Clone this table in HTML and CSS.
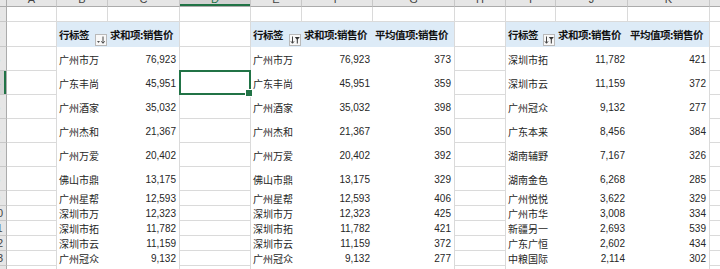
FILE: index.html
```html
<!DOCTYPE html>
<html lang="zh-CN">
<head>
<meta charset="utf-8">
<title>数据透视表</title>
<link rel="stylesheet" href="styles.css">
</head>
<body>
<div class="sheet">
  <div class="corner"></div>
  <div class="ch"><span>A</span></div>
  <div class="ch"><span>B</span></div>
  <div class="ch"><span>C</span></div>
  <div class="ch sel"><span>D</span></div>
  <div class="ch"><span>E</span></div>
  <div class="ch"><span>F</span></div>
  <div class="ch"><span>G</span></div>
  <div class="ch"><span>H</span></div>
  <div class="ch"><span>I</span></div>
  <div class="ch"><span>J</span></div>
  <div class="ch"><span>K</span></div>
  <div class="ch"><span>L</span></div>

  <div class="rh"><span>1</span></div>
  <div class="c"></div><div class="c"></div><div class="c"></div><div class="c"></div>
  <div class="c"></div><div class="c"></div><div class="c"></div><div class="c"></div>
  <div class="c"></div><div class="c"></div><div class="c"></div><div class="c"></div>

  <div class="rh"><span>2</span></div>
  <div class="c"></div>
  <div class="pivot pv1">
    <div class="hd lbl"><span>行标签</span>
      <span class="fbtn"><svg viewBox="0 0 10 10" width="10" height="10"><path d="M1 6h3l-1.5 2z" fill="#555"/><path d="M7 1.5v6.5M5.3 6.3L7 8.3 8.7 6.3" stroke="#444" stroke-width="1" fill="none"/></svg></span>
    </div>
    <div class="hd">求和项:销售价</div>
    <div class="t">广州市万</div><div class="n">76,923</div>
    <div class="t">广东丰尚</div><div class="n">45,951</div>
    <div class="t">广州酒家</div><div class="n">35,032</div>
    <div class="t">广州杰和</div><div class="n">21,367</div>
    <div class="t">广州万爱</div><div class="n">20,402</div>
    <div class="t">佛山市鼎</div><div class="n">13,175</div>
    <div class="t">广州星帮</div><div class="n">12,593</div>
    <div class="t">深圳市万</div><div class="n">12,323</div>
    <div class="t">深圳市拓</div><div class="n">11,782</div>
    <div class="t">深圳市云</div><div class="n">11,159</div>
    <div class="t">广州冠众</div><div class="n">9,132</div>
  </div>
  <div class="c"></div>
  <div class="pivot pv2">
    <div class="hd lbl"><span>行标签</span>
      <span class="fbtn"><svg viewBox="0 0 10 10" width="10" height="10"><path d="M2.5 1.5v6.5M0.9 6.3L2.5 8.3 4.1 6.3" stroke="#444" stroke-width="1" fill="none"/><path d="M4.8 2h5l-2 2.6V8.5h-1V4.6z" fill="#333"/></svg></span>
    </div>
    <div class="hd">求和项:销售价</div>
    <div class="hd">平均值项:销售价</div>
    <div class="t">广州市万</div><div class="n">76,923</div><div class="n">373</div>
    <div class="t">广东丰尚</div><div class="n">45,951</div><div class="n">359</div>
    <div class="t">广州酒家</div><div class="n">35,032</div><div class="n">398</div>
    <div class="t">广州杰和</div><div class="n">21,367</div><div class="n">350</div>
    <div class="t">广州万爱</div><div class="n">20,402</div><div class="n">392</div>
    <div class="t">佛山市鼎</div><div class="n">13,175</div><div class="n">329</div>
    <div class="t">广州星帮</div><div class="n">12,593</div><div class="n">406</div>
    <div class="t">深圳市万</div><div class="n">12,323</div><div class="n">425</div>
    <div class="t">深圳市拓</div><div class="n">11,782</div><div class="n">421</div>
    <div class="t">深圳市云</div><div class="n">11,159</div><div class="n">372</div>
    <div class="t">广州冠众</div><div class="n">9,132</div><div class="n">277</div>
  </div>
  <div class="c"></div>
  <div class="pivot pv3">
    <div class="hd lbl"><span>行标签</span>
      <span class="fbtn"><svg viewBox="0 0 10 10" width="10" height="10"><path d="M2.5 1.5v6.5M0.9 6.3L2.5 8.3 4.1 6.3" stroke="#444" stroke-width="1" fill="none"/><path d="M4.8 2h5l-2 2.6V8.5h-1V4.6z" fill="#333"/></svg></span>
    </div>
    <div class="hd">求和项:销售价</div>
    <div class="hd">平均值项:销售价</div>
    <div class="t">深圳市拓</div><div class="n">11,782</div><div class="n">421</div>
    <div class="t">深圳市云</div><div class="n">11,159</div><div class="n">372</div>
    <div class="t">广州冠众</div><div class="n">9,132</div><div class="n">277</div>
    <div class="t">广东本来</div><div class="n">8,456</div><div class="n">384</div>
    <div class="t">湖南辅野</div><div class="n">7,167</div><div class="n">326</div>
    <div class="t">湖南金色</div><div class="n">6,268</div><div class="n">285</div>
    <div class="t">广州悦悦</div><div class="n">3,622</div><div class="n">329</div>
    <div class="t">广州市华</div><div class="n">3,008</div><div class="n">334</div>
    <div class="t">新疆另一</div><div class="n">2,693</div><div class="n">539</div>
    <div class="t">广东广恒</div><div class="n">2,602</div><div class="n">434</div>
    <div class="t">中粮国际</div><div class="n">2,114</div><div class="n">302</div>
  </div>
  <div class="c"></div>

  <div class="rh"><span>3</span></div><div class="c"></div><div class="c"></div><div class="c"></div><div class="c"></div>
  <div class="rh sel"><span>4</span></div><div class="c"></div><div class="c sel"></div><div class="c"></div><div class="c"></div>
  <div class="rh"><span>5</span></div><div class="c"></div><div class="c"></div><div class="c"></div><div class="c"></div>
  <div class="rh"><span>6</span></div><div class="c"></div><div class="c"></div><div class="c"></div><div class="c"></div>
  <div class="rh"><span>7</span></div><div class="c"></div><div class="c"></div><div class="c"></div><div class="c"></div>
  <div class="rh"><span>8</span></div><div class="c"></div><div class="c"></div><div class="c"></div><div class="c"></div>
  <div class="rh"><span>9</span></div><div class="c"></div><div class="c"></div><div class="c"></div><div class="c"></div>
  <div class="rh"><span>10</span></div><div class="c"></div><div class="c"></div><div class="c"></div><div class="c"></div>
  <div class="rh"><span>11</span></div><div class="c"></div><div class="c"></div><div class="c"></div><div class="c"></div>
  <div class="rh"><span>12</span></div><div class="c"></div><div class="c"></div><div class="c"></div><div class="c"></div>
  <div class="rh"><span>13</span></div><div class="c"></div><div class="c"></div><div class="c"></div><div class="c"></div>
  <div class="rh"><span>14</span></div><div class="c"></div><div class="c"></div><div class="c"></div><div class="c"></div>
</div>
</body>
</html>
```

FILE: styles.css
```css
* {
  box-sizing: border-box;
}

html, body {
  margin: 0;
  padding: 0;
}

body {
  width: 720px;
  height: 269px;
  overflow: hidden;
  background: #ffffff;
  font-family: "Liberation Sans", "Noto Sans CJK SC", sans-serif;
}

.sheet {
  display: grid;
  grid-template-columns: 7px 50px 51px 72px 71px 51px 71px 82px 51px 50px 72px 82px 40px;
  grid-template-rows: 7px 15px 25px repeat(6, 24px) repeat(6, 15px);
}

.corner {
  background: #e6e6e6;
  border-right: 1px solid #ababab;
  border-bottom: 1px solid #ababab;
}

.ch {
  background: #e6e6e6;
  border-right: 1px solid #c8c8c8;
  border-bottom: 1px solid #ababab;
  overflow: hidden;
  display: flex;
  justify-content: center;
  align-items: flex-end;
  font-size: 11px;
  color: #444444;
}

.ch span {
  line-height: 11px;
  margin-bottom: 1px;
}

.ch.sel {
  background: #d2d2d2;
  color: #217346;
  box-shadow: inset 0 -2px 0 #217346;
}

.rh {
  background: #e6e6e6;
  border-right: 1px solid #ababab;
  border-bottom: 1px solid #c8c8c8;
  overflow: hidden;
  display: flex;
  align-items: center;
  font-size: 11px;
  color: #444444;
}

.rh span {
  flex: none;
  width: 20px;
  margin-left: -13px;
  text-align: center;
}

.rh.sel {
  background: #d2d2d2;
  box-shadow: inset -2px 0 0 #217346;
}

.c {
  border-right: 1px solid #dadada;
  border-bottom: 1px solid #dadada;
}

.c.sel {
  position: relative;
  z-index: 2;
}

.c.sel::before {
  content: "";
  position: absolute;
  left: -1px;
  top: -1px;
  right: -1px;
  bottom: -1px;
  border: 2px solid #217346;
}

.c.sel::after {
  content: "";
  position: absolute;
  right: -3px;
  bottom: -3px;
  width: 6px;
  height: 6px;
  background: #217346;
  border: 1px solid #ffffff;
}

.pivot {
  grid-row: 3 / 16;
  background: #ffffff;
  border-right: 1px solid #dadada;
  display: grid;
  grid-template-rows: 25px repeat(6, 24px) repeat(6, 15px);
  overflow: hidden;
}

.pv1 {
  grid-column: 3 / 5;
  grid-template-columns: 51px 1fr;
}

.pv2 {
  grid-column: 6 / 9;
  grid-template-columns: 51px 71px 1fr;
}

.pv3 {
  grid-column: 10 / 13;
  grid-template-columns: 50px 72px 1fr;
}

.hd {
  background: #ddebf7;
  display: flex;
  align-items: center;
  padding-left: 2px;
  font-family: "Noto Sans CJK SC", sans-serif;
  font-weight: bold;
  font-size: 10.5px;
  letter-spacing: -0.5px;
  color: #111111;
  white-space: nowrap;
  overflow: hidden;
}

.hd.lbl {
  padding-right: 1px;
}

.fbtn {
  margin-left: auto;
  align-self: flex-end;
  margin-bottom: 1px;
  width: 12px;
  height: 12px;
  border: 1px solid #b9b9b9;
  background: #f8f8f8;
  display: flex;
  align-items: center;
  justify-content: center;
  letter-spacing: 0;
}

.fbtn svg {
  display: block;
}

.t {
  display: flex;
  align-items: center;
  padding-left: 2px;
  font-family: "Noto Sans CJK SC", sans-serif;
  font-size: 10px;
  color: #262626;
  white-space: nowrap;
  overflow: hidden;
}

.n {
  display: flex;
  align-items: center;
  justify-content: flex-end;
  padding-right: 3px;
  font-family: "Liberation Sans", sans-serif;
  font-size: 10px;
  color: #262626;
  white-space: nowrap;
}
```
